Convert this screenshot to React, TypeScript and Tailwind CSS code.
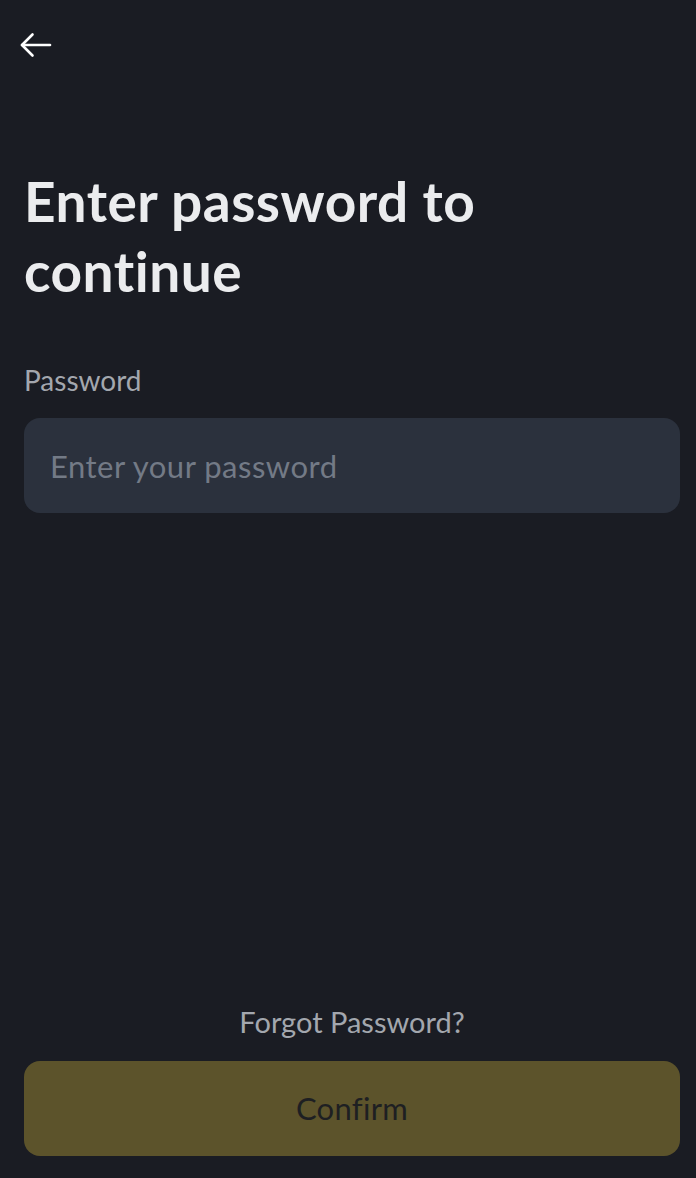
export default function App() {
    return (
        <div className="flex h-[1178px] w-[696px] flex-col bg-[#1a1c23] pl-6 pr-4 font-['Lato','Liberation_Sans',sans-serif]">
            <div className="flex h-[90px] items-center">
                <svg width="34" height="26" viewBox="0 0 34 26" className="-ml-[5px]" fill="none" stroke="#ffffff" strokeWidth="2.6" strokeLinecap="round" strokeLinejoin="round">
                    <path d="M31 13H3" />
                    <path d="M13.5 2.5L3 13l10.5 10.5" />
                </svg>
            </div>
            <h1 className="mt-[76px] w-[490px] text-[55px] font-bold leading-[70px] tracking-[0.5px] text-[#ebecee]">
                Enter password to continue
            </h1>
            <label className="mt-[58px] text-[28px] leading-[32px] text-[#a3a7ae]">Password</label>
            <input
                type="password"
                placeholder="Enter your password"
                className="mt-[22px] h-[95px] w-full rounded-[16px] bg-[#2b313d] px-[26px] text-[31px] tracking-[0.5px] text-white outline-none placeholder:text-[#737a86]"
            />
            <div className="flex-1" />
            <button className="mb-[18px] text-center text-[29px] text-[#a3a7ae]">Forgot Password?</button>
            <button className="mb-[22px] h-[95px] w-full rounded-[16px] bg-[#5c532b] text-[31px] tracking-[0.3px] text-[#1e1f22]">
                Confirm
            </button>
        </div>
    )
}
